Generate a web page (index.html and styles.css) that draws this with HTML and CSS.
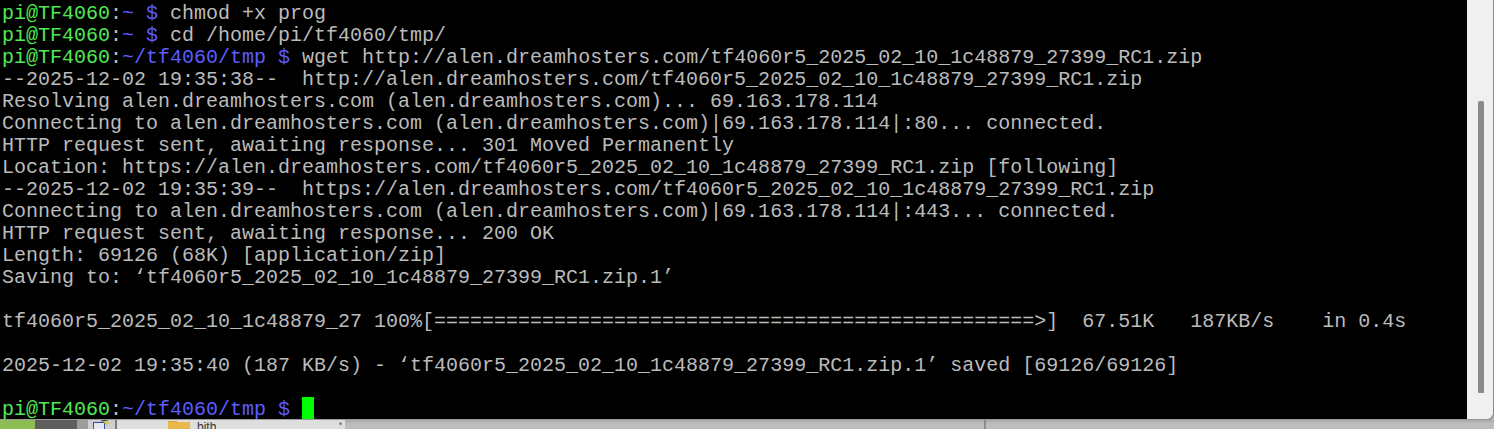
FILE: index.html
```html
<!DOCTYPE html>
<html>
<head>
<meta charset="utf-8">
<link rel="stylesheet" href="styles.css">
</head>
<body>
<div class="window">
  <div class="term">
    <div class="line"><span class="g">pi@TF4060</span>:<span class="b">~ $</span> chmod +x prog</div>
    <div class="line"><span class="g">pi@TF4060</span>:<span class="b">~ $</span> cd /home/pi/tf4060/tmp/</div>
    <div class="line"><span class="g">pi@TF4060</span>:<span class="b">~/tf4060/tmp $</span> wget http://alen.dreamhosters.com/tf4060r5_2025_02_10_1c48879_27399_RC1.zip</div>
    <div class="line">--2025-12-02 19:35:38--  http://alen.dreamhosters.com/tf4060r5_2025_02_10_1c48879_27399_RC1.zip</div>
    <div class="line">Resolving alen.dreamhosters.com (alen.dreamhosters.com)... 69.163.178.114</div>
    <div class="line">Connecting to alen.dreamhosters.com (alen.dreamhosters.com)|69.163.178.114|:80... connected.</div>
    <div class="line">HTTP request sent, awaiting response... 301 Moved Permanently</div>
    <div class="line">Location: https://alen.dreamhosters.com/tf4060r5_2025_02_10_1c48879_27399_RC1.zip [following]</div>
    <div class="line">--2025-12-02 19:35:39--  https://alen.dreamhosters.com/tf4060r5_2025_02_10_1c48879_27399_RC1.zip</div>
    <div class="line">Connecting to alen.dreamhosters.com (alen.dreamhosters.com)|69.163.178.114|:443... connected.</div>
    <div class="line">HTTP request sent, awaiting response... 200 OK</div>
    <div class="line">Length: 69126 (68K) [application/zip]</div>
    <div class="line">Saving to: ‘tf4060r5_2025_02_10_1c48879_27399_RC1.zip.1’</div>
    <div class="line"> </div>
    <div class="line">tf4060r5_2025_02_10_1c48879_27 100%[==================================================&gt;]  67.51K   187KB/s    in 0.4s</div>
    <div class="line"> </div>
    <div class="line">2025-12-02 19:35:40 (187 KB/s) - ‘tf4060r5_2025_02_10_1c48879_27399_RC1.zip.1’ saved [69126/69126]</div>
    <div class="line"> </div>
    <div class="line"><span class="g">pi@TF4060</span>:<span class="b">~/tf4060/tmp $</span> <span class="cursor"> </span></div>
  </div>
  <div class="scrollbar"><div class="thumb"></div></div>
</div>
<div class="taskbar">
  <div class="tb-green"></div>
  <div class="tb-dark"></div>
  <div class="tb-gap"></div>
  <div class="tb-icon">
    <svg width="26" height="9" viewBox="0 0 26 9"><rect x="5" y="2" width="12" height="7" fill="#2a4fb0"/><rect x="6" y="3" width="10" height="6" fill="#e8e8f4"/><path d="M14 0 L22 3 L18 5 Z" fill="#e0c040"/><path d="M13 1 L20 0" stroke="#333" stroke-width="1"/></svg>
  </div>
  <div class="tb-sep"></div>
  <div class="tb-app">
    <svg class="folder" width="22" height="9" viewBox="0 0 22 9"><rect x="0" y="1" width="9" height="3" fill="#d9a431"/><rect x="0" y="2" width="22" height="7" fill="#e8b94a"/></svg>
    <span class="tb-text">bitb</span>
    <span class="tb-dot"></span>
  </div>
  <div class="tb-rest"></div>
  <div class="tb-line"></div>
  <div class="tb-rest2"></div>
</div>
</body>
</html>
```

FILE: styles.css
```css
html, body {
  margin: 0;
  padding: 0;
  width: 1494px;
  height: 429px;
  overflow: hidden;
  background: #b8b8b8;
}

.window {
  display: flex;
  width: 1494px;
  height: 420px;
  box-sizing: border-box;
  border-right: 1px solid #8a8a8a;
  border-bottom: 1px solid #9a9a9a;
  border-bottom-right-radius: 8px;
  background: #f0f0f0;
  box-shadow: 0 1px 2px rgba(0,0,0,0.25);
}

.term {
  width: 1467px;
  height: 100%;
  background: #000;
  box-sizing: border-box;
  padding: 1px 0 0 2px;
  font-family: "Liberation Mono", "Courier New", monospace;
  font-size: 20px;
  color: #bbbbbb;
}

.line {
  height: 22px;
  line-height: 26px;
  white-space: pre;
}

.g { color: #52e852; }
.b { color: #5c5cff; }

.cursor {
  display: inline-block;
  width: 12px;
  height: 22px;
  vertical-align: top;
  background: #00ff00;
}

.scrollbar {
  flex: 1;
  display: flex;
  padding: 101px 0 26px 11px;
  background: #f0f0f0;
  border-bottom-right-radius: 7px;
}

.thumb {
  width: 6px;
  height: 292px;
  background: #8a8a8a;
  border-radius: 2px 2px 1px 1px;
}

.taskbar {
  display: flex;
  height: 9px;
  background: linear-gradient(#a8a8a8, #bdbdbd 40%);
}

.tb-green {
  width: 35px;
  background: #8cbc52;
}

.tb-dark {
  width: 42px;
  background: #5e5e5e;
}

.tb-gap {
  width: 11px;
  background: #9c9c9c;
}

.tb-icon {
  width: 27px;
  background: #cfcfcf;
}

.tb-icon svg { display: block; }

.tb-sep {
  width: 2px;
  background: #7a7a7a;
}

.tb-app {
  width: 228px;
  display: flex;
  align-items: flex-end;
  background: #dedede;
  position: relative;
}

.folder {
  display: block;
  margin-left: 51px;
}

.tb-text {
  margin-left: 7px;
  font-family: "Liberation Sans", sans-serif;
  font-size: 12px;
  line-height: 9px;
  height: 9px;
  overflow: hidden;
  color: #333;
  align-self: flex-start;
  padding-top: 3px;
}

.tb-dot {
  position: absolute;
  left: 222px;
  top: 2px;
  width: 3px;
  height: 3px;
  border-radius: 50%;
  background: #888;
}

.tb-rest {
  width: 639px;
}

.tb-line {
  width: 2px;
  background: #8c8c8c;
}

.tb-rest2 {
  flex: 1;
}
```
